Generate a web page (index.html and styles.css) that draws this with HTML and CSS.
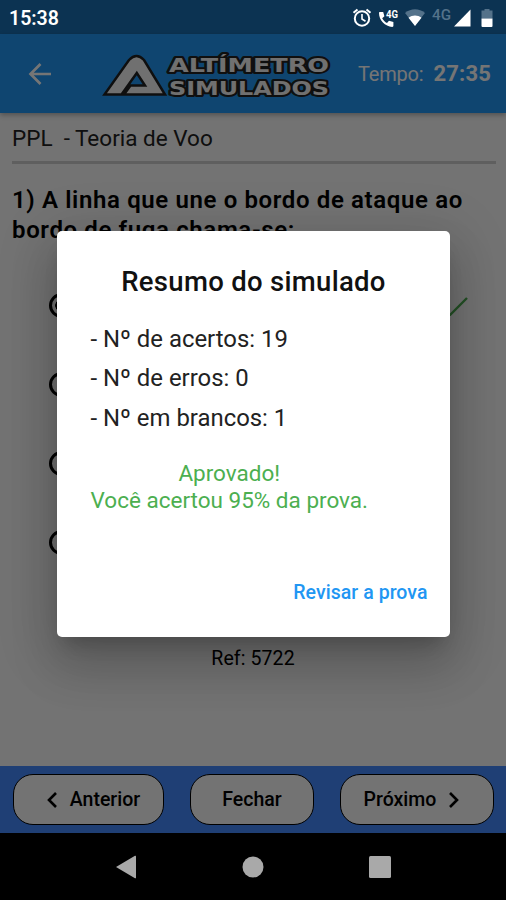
FILE: index.html
```html
<!DOCTYPE html>
<html lang="pt-BR">
<head>
    <meta charset="UTF-8">
    <meta name="viewport" content="width=device-width, initial-scale=1.0">
    <title>Altímetro Simulados</title>
    <link rel="stylesheet" href="styles.css">
</head>
<body>
    <div class="status-bar">
        <span class="clock">15:38</span>
        <svg class="status-icons" width="150" height="24" viewBox="0 0 150 24">
            <!-- alarme -->
            <g fill="none" stroke="#fff" stroke-width="2">
                <circle cx="13" cy="12.500" r="7.200"/>
                <path d="M13 8v5l3.500 2.200" stroke-width="1.600"/>
                <path d="M4.500 6.800l4-3.400M21.500 6.800l-4-3.400"/>
            </g>
            <!-- telefone 4G -->
            <path fill="#fff" d="M31 6h3.200l1.200 4.200-2.200 2c1.200 2.200 2.700 3.700 4.800 4.800l2-2.200 4.400 1.200v3.800c0 .7-.4 1.100-1.100 1.100C36 20.500 30 14.300 30 7c0-.6.4-1 1-1z"/>
            <text class="tag-small" x="37" y="11.500" textLength="12" lengthAdjust="spacingAndGlyphs">4G</text>
            <!-- wifi -->
            <path fill="#54728a" d="M56 7c6-5 14-5 20 0L66 19.500z"/>
            <path fill="#fff" d="M59.500 11.800c4-3 9-3 13 0L66 20z"/>
            <text class="tag" x="83" y="14" textLength="19" lengthAdjust="spacingAndGlyphs">4G</text>
            <!-- sinal -->
            <path fill="#fff" d="M105 20.500L121.500 3.500v17z"/>
            <!-- bateria -->
            <path fill="#54728a" d="M132.500 4.500h3V3h5v1.500h3v8h-11z"/>
            <path fill="#fff" d="M132.500 12.500h11v7.500a1 1 0 0 1-1 1h-9a1 1 0 0 1-1-1z"/>
        </svg>
    </div>

    <div class="app">
        <header class="header">
            <svg class="back" width="24" height="24" viewBox="0 0 24 24">
                <path fill="none" stroke="#fff" stroke-width="2.700" d="M23 12H3M12.500 2L2.500 12l10 10"/>
            </svg>
            <svg class="logo" width="232" height="52" viewBox="0 0 232 52">
                <path class="logo-mark" fill-rule="evenodd" d="M2.500 46.500L27 12Q34.500 4 42 12L63 46.500H22l6.500-9h14.500L34.800 25 19.500 46.500z"/>
                <text class="logo-text" x="67" y="24" textLength="160" lengthAdjust="spacingAndGlyphs">ALTÍMETRO</text>
                <text class="logo-text" x="67" y="46.500" textLength="160" lengthAdjust="spacingAndGlyphs">SIMULADOS</text>
            </svg>
            <span class="time-label">Tempo:</span>
            <span class="time">27:35</span>
        </header>

        <main class="content">
            <div class="subject">PPL&nbsp; - Teoria de Voo</div>
            <h2 class="question">1) A linha que une o bordo de ataque ao<br>bordo de fuga chama-se:</h2>
            <div class="options">
                <div class="option">
                    <span class="radio checked"></span>
                    <svg class="check" width="26" height="20" viewBox="0 0 26 20">
                        <path fill="none" stroke="#4caf50" stroke-width="2.400" d="M1 12l7 7L25 2"/>
                    </svg>
                </div>
                <div class="option"><span class="radio"></span></div>
                <div class="option"><span class="radio"></span></div>
                <div class="option"><span class="radio"></span></div>
            </div>
            <div class="ref">Ref: 5722</div>
        </main>

        <footer class="footer">
            <button class="btn btn-prev">
                <svg width="10" height="16" viewBox="0 0 10 16"><path fill="none" stroke="#000" stroke-width="2.600" d="M9 1L2 8l7 7"/></svg>
                Anterior
            </button>
            <button class="btn btn-close">Fechar</button>
            <button class="btn btn-next">
                Próximo
                <svg width="10" height="16" viewBox="0 0 10 16"><path fill="none" stroke="#000" stroke-width="2.600" d="M1 1l7 7-7 7"/></svg>
            </button>
        </footer>

        <div class="overlay">
            <div class="modal">
                <h1 class="modal-title">Resumo do simulado</h1>
                <div class="results">
                    <p>- Nº de acertos: 19</p>
                    <p>- Nº de erros: 0</p>
                    <p>- Nº em brancos: 1</p>
                </div>
                <div class="approved">Aprovado!<br>Você acertou 95% da prova.</div>
                <a class="review" href="#">Revisar a prova</a>
            </div>
        </div>
    </div>

    <nav class="nav-bar">
        <svg width="22" height="24" viewBox="0 0 22 24"><path fill="#a9a9a9" d="M1 12L20 .8q1-.5 1 .7v21q0 1.200-1 .7z"/></svg>
        <svg width="22" height="22" viewBox="0 0 22 22"><circle fill="#a9a9a9" cx="11" cy="11" r="10.500"/></svg>
        <svg width="22" height="22" viewBox="0 0 22 22"><rect fill="#a9a9a9" width="22" height="22" rx="1.500"/></svg>
    </nav>
</body>
</html>
```
FILE: styles.css
```css
* {
    margin: 0;
    padding: 0;
    box-sizing: border-box;
}

body {
    font-family: Roboto, sans-serif;
    width: 506px;
    height: 900px;
    display: flex;
    flex-direction: column;
    overflow: hidden;
    background-color: #000;
    white-space: nowrap;
}

.status-bar {
    height: 34px;
    background-color: #0c3352;
    color: white;
    display: flex;
    align-items: center;
    justify-content: space-between;
    padding: 2px 7px 0 9px;
}

.clock {
    font-size: 19.5px;
    font-weight: 600;
}

.tag {
    font-size: 15.5px;
    font-weight: 500;
    fill: #54728a;
}

.tag-small {
    font-size: 11.5px;
    font-weight: 700;
    fill: white;
}

.app {
    position: relative;
    height: 799px;
    display: flex;
    flex-direction: column;
    background-color: #fafafa;
}

.header {
    height: 79px;
    flex-shrink: 0;
    background-color: #2196f3;
    color: white;
    display: flex;
    align-items: center;
    padding-left: 28px;
    box-shadow: 0 2px 5px rgba(0, 0, 0, 0.3);
}

.logo {
    margin-left: 50px;
    margin-right: 24px;
}

.logo-mark {
    fill: #f5f5f5;
    stroke: #222;
    stroke-width: 2.5px;
}

.logo-text {
    font-family: "DejaVu Sans", sans-serif;
    font-size: 19px;
    font-weight: bold;
    fill: #f5f5f5;
    stroke: #222;
    stroke-width: 4px;
    stroke-linejoin: round;
    paint-order: stroke;
}

.time-label {
    font-size: 20px;
    letter-spacing: -0.2px;
}

.time {
    font-size: 22px;
    font-weight: bold;
    letter-spacing: 0.2px;
    margin-left: 10px;
}

.content {
    flex: 1;
    padding: 0 10px 0 12px;
}

.subject {
    height: 51px;
    padding-top: 11px;
    font-size: 22.5px;
    line-height: 28px;
    color: #222;
    border-bottom: 3px solid #d0d0d0;
}

.question {
    margin-top: 22px;
    font-size: 24px;
    font-weight: 600;
    letter-spacing: 0.63px;
    line-height: 29.5px;
}

.options {
    margin-top: 21px;
    padding: 0 28px 0 37px;
}

.option {
    height: 79px;
    display: flex;
    align-items: center;
    justify-content: space-between;
}

.radio {
    width: 25px;
    height: 25px;
    border: 3px solid #000;
    border-radius: 50%;
}

.checked {
    background: radial-gradient(circle, #000 6px, transparent 6.5px);
}

.ref {
    margin-top: 65px;
    padding-right: 2px;
    text-align: center;
    font-size: 19.5px;
    letter-spacing: 0.1px;
    line-height: 24px;
}

.footer {
    height: 67px;
    background-color: #448aff;
    display: flex;
    align-items: center;
    justify-content: space-between;
    padding: 0 12px 0 13px;
}

.btn {
    height: 51px;
    display: flex;
    align-items: center;
    justify-content: center;
    gap: 13px;
    border: 1.5px solid #000;
    border-radius: 20px;
    background-color: #fafafa;
    font-family: Roboto, sans-serif;
    font-size: 19.5px;
    font-weight: 500;
    color: #000;
}

.btn-prev {
    width: 151px;
    padding-left: 10px;
}

.btn-close {
    width: 124px;
}

.btn-next {
    width: 154px;
    padding-right: 11px;
}

.overlay {
    position: absolute;
    top: 0;
    left: 0;
    width: 100%;
    height: 100%;
    background-color: rgba(0, 0, 0, 0.54);
    display: flex;
    justify-content: center;
    align-items: center;
}

.modal {
    width: 393px;
    height: 406px;
    padding: 34px 22px 28px 34px;
    background-color: white;
    border-radius: 5px;
    box-shadow: 0 13px 18px -8px rgba(0, 0, 0, 0.2), 0 29px 46px 4px rgba(0, 0, 0, 0.14), 0 11px 56px 10px rgba(0, 0, 0, 0.12);
    display: flex;
    flex-direction: column;
}

.modal-title {
    margin-right: 11px;
    text-align: center;
    font-size: 27.5px;
    font-weight: 500;
    letter-spacing: 0.3px;
    line-height: 34px;
    color: #111;
}

.results {
    margin-top: 21px;
    font-size: 23.9px;
    line-height: 39.5px;
    color: #222;
}

.approved {
    align-self: flex-start;
    margin-top: 22px;
    text-align: center;
    font-size: 22.5px;
    line-height: 27px;
    color: #4caf50;
}

.review {
    margin-top: auto;
    align-self: flex-end;
    font-size: 19.5px;
    font-weight: 500;
    letter-spacing: 0.05px;
    line-height: 32px;
    color: #2196f3;
    text-decoration: none;
}

.nav-bar {
    flex: 1;
    display: flex;
    align-items: center;
    justify-content: space-between;
    padding: 0 115px 0 115px;
}
```
